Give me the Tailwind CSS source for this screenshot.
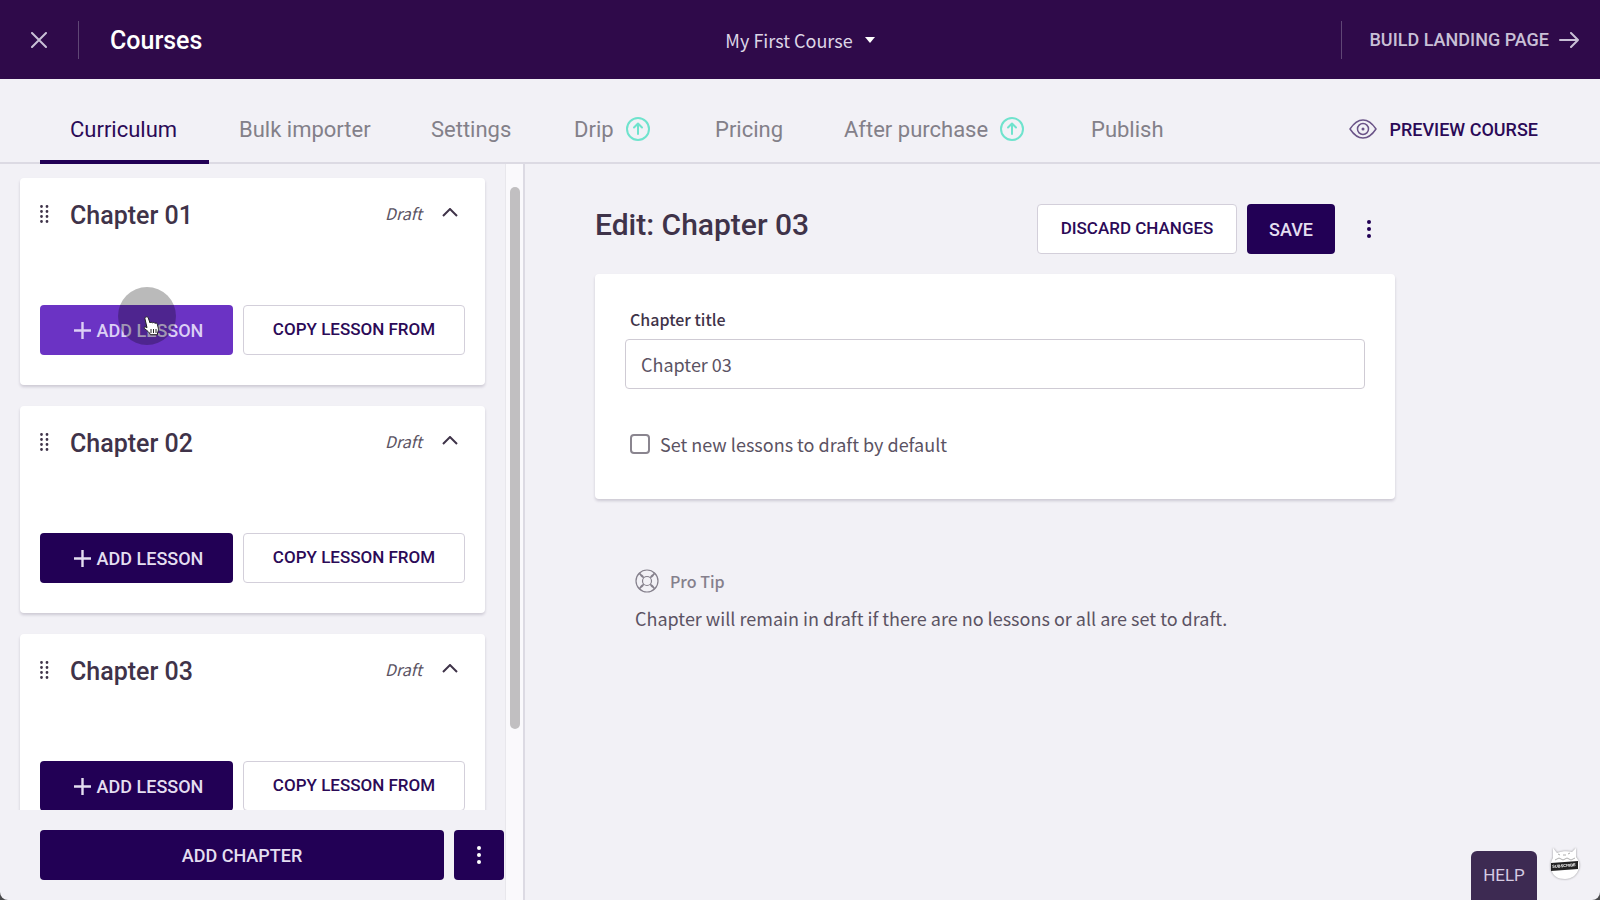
<!DOCTYPE html>
<html lang="en">
  <head>
    <meta charset="UTF-8" />
    <meta name="viewport" content="width=device-width, initial-scale=1.0" />
    <title>My First Course - Courses</title>
    <script src="https://cdn.jsdelivr.net/npm/@tailwindcss/browser@4"></script>
  </head>
  <body class="bg-[#4a4a4c]">
    <div class="flex h-screen flex-col overflow-hidden rounded-b-lg bg-[#f2f1f6] font-['Roboto',sans-serif] text-[#3f3349]">
      <!-- Top bar -->
      <header class="flex h-[79px] shrink-0 items-center bg-[#2f0a4a] text-[#c9c0d6]">
        <div class="flex flex-1 items-center">
          <button type="button" aria-label="Close" class="flex w-[78px] justify-center">
            <svg class="size-4" viewBox="0 0 16 16" fill="none" stroke="currentColor" stroke-width="2" stroke-linecap="round">
              <path d="M1 1l14 14M15 1L1 15" />
            </svg>
          </button>
          <div class="h-[38px] w-px bg-[#5f4675]"></div>
          <h1 class="ml-[31px] pt-[2px] text-[25px] leading-8 font-medium text-white">Courses</h1>
        </div>
        <button type="button" class="flex items-center gap-3 font-['Noto_Sans_CJK_SC',sans-serif] text-[18px] leading-6 text-[#ddd6e6]">
          My First Course
          <svg class="h-[6px] w-[10px]" viewBox="0 0 10 6" fill="#fff"><path d="M0 0h10L5 6z" /></svg>
        </button>
        <div class="flex flex-1 items-center justify-end">
          <div class="h-[38px] w-px bg-[#5f4675]"></div>
          <a href="#" class="ml-7 mr-[21px] flex items-center gap-[10px] text-[18px] font-medium">
            BUILD LANDING PAGE
            <svg class="h-4 w-5" viewBox="0 0 20 16" fill="none" stroke="currentColor" stroke-width="2" stroke-linecap="round" stroke-linejoin="round">
              <path d="M1 8h18M12 1l7 7-7 7" />
            </svg>
          </a>
        </div>
      </header>

      <!-- Tabs -->
      <nav class="flex h-[85px] shrink-0 items-stretch border-b-2 border-[#dcdae3] pl-10 text-[22px] text-[#838089]">
        <a href="#" class="-mb-[2px] flex w-[169px] items-center border-b-4 border-[#220055] pt-5 pb-px pl-[30px] text-[#2b0a57]">Curriculum</a>
        <a href="#" class="flex w-[192px] items-center pt-[17px] pl-[30px]">Bulk importer</a>
        <a href="#" class="flex w-[143px] items-center pt-[17px] pl-[30px]">Settings</a>
        <a href="#" class="flex w-[141px] items-center gap-3 pt-[17px] pl-[30px]">
          Drip
          <svg class="size-6" viewBox="0 0 24 24" fill="none" stroke="#6fe3cd" stroke-width="2" stroke-linecap="round" stroke-linejoin="round">
            <circle cx="12" cy="12" r="11" />
            <path d="M12 17V7M8 10.500l4-4 4 4" />
          </svg>
        </a>
        <a href="#" class="flex w-[129px] items-center pt-[17px] pl-[30px]">Pricing</a>
        <a href="#" class="flex w-[247px] items-center gap-3 pt-[17px] pl-[30px]">
          After purchase
          <svg class="size-6" viewBox="0 0 24 24" fill="none" stroke="#6fe3cd" stroke-width="2" stroke-linecap="round" stroke-linejoin="round">
            <circle cx="12" cy="12" r="11" />
            <path d="M12 17V7M8 10.500l4-4 4 4" />
          </svg>
        </a>
        <a href="#" class="flex items-center pt-[17px] pl-[30px]">Publish</a>
        <a href="#" class="mr-[62px] ml-auto flex items-center gap-3 pt-[17px] text-[18px] font-medium text-[#2b0a57]">
          <svg class="h-5 w-7" viewBox="0 0 28 20" fill="none" stroke="#6b5488" stroke-width="1.500">
            <path d="M1 10C5 4 9 1 14 1s9 3 13 9c-4 6-8 9-13 9S5 16 1 10z" stroke-linejoin="round" />
            <circle cx="14" cy="10" r="5.500" />
            <circle cx="14" cy="10" r="1.500" fill="#6b5488" stroke="none" />
          </svg>
          PREVIEW COURSE
        </a>
      </nav>

      <div class="flex min-h-0 flex-1">
        <!-- Chapter list -->
        <aside class="flex w-[525px] shrink-0 border-r-2 border-[#dcdae3]">
          <div class="flex min-w-0 flex-1 flex-col">
            <div class="flex min-h-0 flex-1 flex-col gap-[21px] overflow-hidden px-5 pt-[14px]">
              <section class="h-[207px] shrink-0 rounded bg-white px-5 pt-[22px] shadow-[0_2px_3px_rgba(60,50,80,0.2)]">
                <div class="flex h-8 items-center">
                  <svg class="mb-1 h-[18px] w-[9px]" viewBox="0 0 9 18" fill="none" stroke="#3f3349" stroke-width="2.800" stroke-linecap="round">
                    <path d="M1.500 1.500h0M7 1.500h0M1.500 6.500h0M7 6.500h0M1.500 11.500h0M7 11.500h0M1.500 16.500h0M7 16.500h0" />
                  </svg>
                  <h2 class="ml-[21px] flex-1 text-[25px] font-medium">Chapter 01</h2>
                  <div class="flex items-center pr-[7px] pb-[7px]">
                    <em class="font-['Noto_Sans_CJK_SC',sans-serif] text-base leading-6 text-[#5b5363]">Draft</em>
                    <button type="button" aria-label="Collapse Chapter 01" class="ml-5">
                      <svg class="h-[9px] w-4" viewBox="0 0 16 9" fill="none" stroke="#3f3349" stroke-width="2"><path d="M1 8l7-7 7 7" /></svg>
                    </button>
                  </div>
                </div>
                <div class="relative mt-[73px] flex gap-[10px]">
                  <button type="button" class="flex h-[50px] w-[193px] items-center justify-center gap-[6px] rounded bg-[#6b33c4] pl-1 text-[18px] font-medium text-[#dccff5]">
                    <svg class="size-[17px]" viewBox="0 0 17 17" stroke="currentColor" stroke-width="2.400"><path d="M8.500 0v17M0 8.500h17" /></svg>
                    ADD LESSON
                  </button>
                  <button type="button" class="h-[50px] flex-1 rounded border border-[#d3cfda] bg-white text-[17px] font-medium text-[#2b0a57]">COPY LESSON FROM</button>
                  <!-- Pointer with its click highlight -->
                  <div class="pointer-events-none absolute -top-[18px] left-[78px] size-[58px] rounded-full bg-black/27">
                    <svg class="absolute top-[29px] left-[25px] h-5 w-[17px]" viewBox="0 0 17 20" fill="#fff" stroke="#222" stroke-width="1" stroke-linejoin="round">
                      <path d="M3 1c1-.5 2 0 2.300 1l1.700 5c.5-1 2-1 2.500 0 .7-.8 2-.6 2.500.4 1-.7 2-.2 2.300.8l1 4c.5 2-.3 3-.8 4.500v2H7.500c-1-2.500-3.500-4-5.500-5.700C.5 12 1 10.500 3 11l1 .7L2 3c-.2-1 .2-1.700 1-2z" />
                      <path d="M8 13v4M10.500 13v4M13 13v4" fill="none" />
                    </svg>
                  </div>
                </div>
              </section>

              <section class="h-[207px] shrink-0 rounded bg-white px-5 pt-[22px] shadow-[0_2px_3px_rgba(60,50,80,0.2)]">
                <div class="flex h-8 items-center">
                  <svg class="mb-1 h-[18px] w-[9px]" viewBox="0 0 9 18" fill="none" stroke="#3f3349" stroke-width="2.800" stroke-linecap="round">
                    <path d="M1.500 1.500h0M7 1.500h0M1.500 6.500h0M7 6.500h0M1.500 11.500h0M7 11.500h0M1.500 16.500h0M7 16.500h0" />
                  </svg>
                  <h2 class="ml-[21px] flex-1 text-[25px] font-medium">Chapter 02</h2>
                  <div class="flex items-center pr-[7px] pb-[7px]">
                    <em class="font-['Noto_Sans_CJK_SC',sans-serif] text-base leading-6 text-[#5b5363]">Draft</em>
                    <button type="button" aria-label="Collapse Chapter 02" class="ml-5">
                      <svg class="h-[9px] w-4" viewBox="0 0 16 9" fill="none" stroke="#3f3349" stroke-width="2"><path d="M1 8l7-7 7 7" /></svg>
                    </button>
                  </div>
                </div>
                <div class="mt-[73px] flex gap-[10px]">
                  <button type="button" class="flex h-[50px] w-[193px] items-center justify-center gap-[6px] rounded bg-[#220055] pl-1 text-[18px] font-medium text-[#e4def0]">
                    <svg class="size-[17px]" viewBox="0 0 17 17" stroke="currentColor" stroke-width="2.400"><path d="M8.500 0v17M0 8.500h17" /></svg>
                    ADD LESSON
                  </button>
                  <button type="button" class="h-[50px] flex-1 rounded border border-[#d3cfda] bg-white text-[17px] font-medium text-[#2b0a57]">COPY LESSON FROM</button>
                </div>
              </section>

              <section class="h-[207px] shrink-0 rounded bg-white px-5 pt-[22px] shadow-[0_2px_3px_rgba(60,50,80,0.2)]">
                <div class="flex h-8 items-center">
                  <svg class="mb-1 h-[18px] w-[9px]" viewBox="0 0 9 18" fill="none" stroke="#3f3349" stroke-width="2.800" stroke-linecap="round">
                    <path d="M1.500 1.500h0M7 1.500h0M1.500 6.500h0M7 6.500h0M1.500 11.500h0M7 11.500h0M1.500 16.500h0M7 16.500h0" />
                  </svg>
                  <h2 class="ml-[21px] flex-1 text-[25px] font-medium">Chapter 03</h2>
                  <div class="flex items-center pr-[7px] pb-[7px]">
                    <em class="font-['Noto_Sans_CJK_SC',sans-serif] text-base leading-6 text-[#5b5363]">Draft</em>
                    <button type="button" aria-label="Collapse Chapter 03" class="ml-5">
                      <svg class="h-[9px] w-4" viewBox="0 0 16 9" fill="none" stroke="#3f3349" stroke-width="2"><path d="M1 8l7-7 7 7" /></svg>
                    </button>
                  </div>
                </div>
                <div class="mt-[73px] flex gap-[10px]">
                  <button type="button" class="flex h-[50px] w-[193px] items-center justify-center gap-[6px] rounded bg-[#220055] pl-1 text-[18px] font-medium text-[#e4def0]">
                    <svg class="size-[17px]" viewBox="0 0 17 17" stroke="currentColor" stroke-width="2.400"><path d="M8.500 0v17M0 8.500h17" /></svg>
                    ADD LESSON
                  </button>
                  <button type="button" class="h-[50px] flex-1 rounded border border-[#d3cfda] bg-white text-[17px] font-medium text-[#2b0a57]">COPY LESSON FROM</button>
                </div>
              </section>
            </div>

            <div class="flex shrink-0 gap-[10px] py-5 pr-px pl-10">
              <button type="button" class="h-[50px] flex-1 rounded bg-[#220055] text-[18px] font-medium text-[#e4def0]">ADD CHAPTER</button>
              <button type="button" aria-label="More options" class="flex h-[50px] w-[50px] items-center justify-center rounded bg-[#220055]">
                <svg class="h-[18px] w-1" viewBox="0 0 4 18" fill="#fff"><circle cx="2" cy="2" r="2" /><circle cx="2" cy="9" r="2" /><circle cx="2" cy="16" r="2" /></svg>
              </button>
            </div>
          </div>
          <!-- Scroll track -->
          <div class="w-[18px] shrink-0 border-l border-[#e8e7ec] bg-[#faf9fc] px-1 pt-[23px]">
            <div class="h-[76%] w-[10px] rounded-full bg-[#c1bfc1]"></div>
          </div>
        </aside>

        <!-- Editor -->
        <main class="min-w-0 flex-1 pt-10 pr-10 pl-[70px]">
          <div class="max-w-[800px]">
            <div class="flex items-center">
              <h2 class="flex-1 pb-2 text-[30px] leading-8 font-medium">Edit: Chapter 03</h2>
              <button type="button" class="h-[50px] w-[200px] rounded border border-[#d3cfda] bg-white text-[17px] font-medium text-[#2b0a57]">DISCARD CHANGES</button>
              <button type="button" class="ml-[10px] h-[50px] w-[88px] rounded bg-[#220055] text-[18px] font-medium text-[#e4def0]">SAVE</button>
              <button type="button" aria-label="Chapter actions" class="flex h-[50px] w-[60px] items-center pl-8">
                <svg class="h-[18px] w-1" viewBox="0 0 4 18" fill="#220055"><circle cx="2" cy="2" r="2" /><circle cx="2" cy="9" r="2" /><circle cx="2" cy="16" r="2" /></svg>
              </button>
            </div>

            <form class="mt-5 rounded bg-white px-[30px] pt-[33px] pb-[43px] font-['Noto_Sans_CJK_SC',sans-serif] shadow-[0_2px_3px_rgba(60,50,80,0.2)]">
              <label for="chapter-title" class="block pl-[5px] text-base leading-6 font-medium">Chapter title</label>
              <input id="chapter-title" type="text" value="Chapter 03" class="mt-2 block h-[50px] w-full rounded border border-[#cfcbd4] px-[15px] text-[18px] text-[#5b5363]" />
              <div class="mt-[43px] flex items-center pl-[5px]">
                <input id="draft-default" type="checkbox" class="size-5 appearance-none rounded-sm border-2 border-[#8a858f]" />
                <label for="draft-default" class="pl-[10px] text-[18px] leading-6 text-[#5b5363]">Set new lessons to draft by default</label>
              </div>
            </form>

            <div class="mt-[70px] pl-10 font-['Noto_Sans_CJK_SC',sans-serif]">
              <div class="flex items-center gap-[11px] text-base leading-6 font-medium text-[#85808c]">
                <svg class="size-6" viewBox="0 0 24 24" fill="none" stroke="#85808c" stroke-width="1.200">
                  <circle cx="12" cy="12" r="11" />
                  <circle cx="12" cy="12" r="4.500" />
                  <path d="M5 3.500C5 7 7 8 8.700 8.700M3.500 5C7 5 8 7 8.700 8.700M19 3.500C19 7 17 8 15.300 8.700M20.500 5C17 5 16 7 15.300 8.700M5 20.500C5 17 7 16 8.700 15.300M3.500 19C7 19 8 17 8.700 15.300M19 20.500C19 17 17 16 15.300 15.300M20.500 19C17 19 16 17 15.300 15.300" />
                </svg>
                Pro Tip
              </div>
              <p class="mt-[13px] text-[18px] leading-6 text-[#5b5363]">Chapter will remain in draft if there are no lessons or all are set to draft.</p>
            </div>
          </div>
        </main>
      </div>
    </div>

    <button type="button" class="fixed right-[63px] bottom-0 h-[49px] w-[66px] rounded-t-md bg-[#3d2a52] font-['Roboto',sans-serif] text-[17px] text-[#d5cce2]">HELP</button>
    <!-- Channel badge -->
    <a href="#" class="fixed right-5 bottom-5 h-[33px] w-[30px] drop-shadow-[0_0_1px_rgba(0,0,0,0.4)]">
      <svg viewBox="0 0 30 33" class="h-full w-full">
        <path d="M3 1l4 5c5-2 11-2 15-1l4-4 0 9c3 4 4 7 3 11-2 7-7 11-14 11S2 29 1 21c-.5-4 0-7 2-10z" fill="#fff" />
        <path d="M8 7l2 1M20 6l-2 1M13 8h3M5 13l4-2 4 2 4-2 4 2 4-2" fill="none" stroke="#999" stroke-width=".8" />
        <path d="M1 16l27-2 0 8-27 2z" fill="#222" />
        <text x="14" y="20" text-anchor="middle" font-family="Liberation Sans" font-size="4" font-weight="bold" fill="#fff" transform="rotate(-4 14 20)">SUBSCRIBE</text>
      </svg>
    </a>
  </body>
</html>
